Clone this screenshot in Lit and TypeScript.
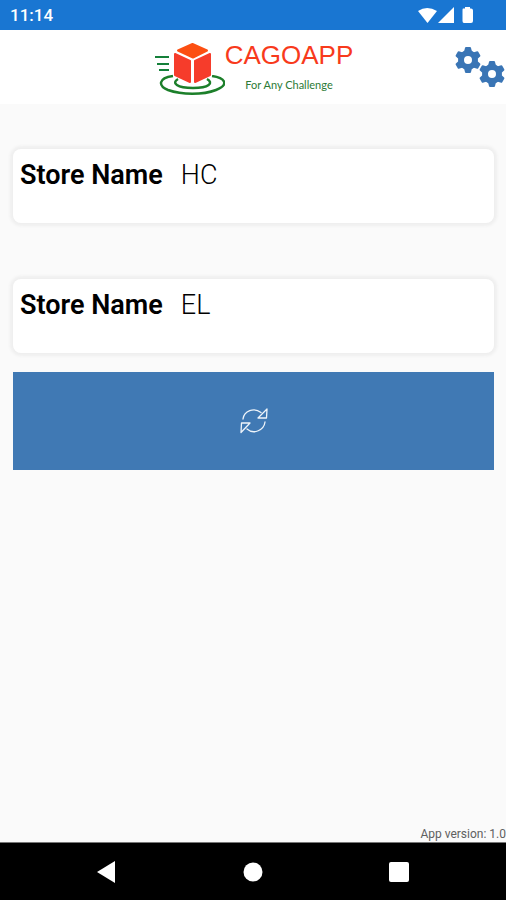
import { LitElement, html, svg, css } from "lit";
import { customElement, property } from "lit/decorators.js";

const TEETH = [0, 60, 120, 180, 240, 300];

const gear = (cx: number, cy: number) => svg`
  <g transform="translate(${cx} ${cy})">
    <circle r="7" fill="none" stroke="currentColor" stroke-width="6" />
    ${TEETH.map(
      (a) => svg`<path transform="rotate(${a})" fill="currentColor" stroke="currentColor"
        stroke-width="2" stroke-linejoin="round" d="M-3 -8 L-2 -12 H2 L3 -8 Z" />`
    )}
  </g>`;

@customElement("store-card")
export class StoreCard extends LitElement {
  @property() name = "";

  static styles = css`
    :host {
      display: block;
      box-sizing: border-box;
      min-height: 74px;
      padding: 10px 7px;
      border-radius: 8px;
      background: #fff;
      box-shadow: 0 0 3px 3px #efefef;
    }
    dl {
      display: flex;
      gap: 18px;
      margin: 0;
      font-size: 27px;
      line-height: 32px;
      color: #000;
    }
    dt {
      font-weight: 600;
    }
    dd {
      margin: 0;
      font-weight: 300;
    }
  `;

  render() {
    return html`<dl><dt>Store Name</dt><dd>${this.name}</dd></dl>`;
  }
}

@customElement("app-root")
export class AppRoot extends LitElement {
  private stores = ["HC", "EL"];

  static styles = css`
    :host {
      display: flex;
      flex-direction: column;
      min-height: 100vh;
      background: #fafafa;
      font-family: Roboto, "Liberation Sans", sans-serif;
    }
    button {
      display: flex;
      align-items: center;
      justify-content: center;
      margin: 0;
      padding: 0;
      border: 0;
      background: none;
      color: inherit;
      cursor: pointer;
    }
    svg {
      display: block;
    }
    .status {
      display: flex;
      align-items: center;
      justify-content: space-between;
      height: 30px;
      padding: 0 32px 0 10px;
      background: #1976d2;
      color: #fff;
      font-size: 17px;
      font-weight: 500;
      line-height: 30px;
    }
    .header {
      display: grid;
      grid-template-columns: 1fr auto 1fr;
      align-items: center;
      height: 74px;
      background: #fff;
    }
    .brand {
      grid-column: 2;
      display: flex;
      align-items: center;
    }
    .title {
      display: flex;
      flex-direction: column;
      align-items: center;
      gap: 8px;
    }
    .name {
      margin: 0;
      color: #f83a1c;
      font: 400 26px/28px "Liberation Sans", sans-serif;
    }
    .tagline {
      margin: 0;
      color: #2c7a36;
      font: 400 11px/16px Lato, sans-serif;
    }
    .settings {
      justify-self: end;
      color: #3a75b5;
    }
    main {
      flex: 1;
      display: flex;
      flex-direction: column;
      padding: 45px 12px 0 13px;
    }
    .stores {
      display: flex;
      flex-direction: column;
      gap: 56px;
    }
    .refresh {
      height: 98px;
      margin-top: 19px;
      background: #4079b4;
      color: #eef4fa;
    }
    .version {
      color: #606060;
      font-size: 12px;
      line-height: 16px;
      text-align: right;
    }
    .nav {
      display: grid;
      grid-template-columns: repeat(3, 1fr);
      height: 58px;
      padding: 0 34px;
      background: #000;
      color: #fff;
      border-top: 1px solid #777;
      box-sizing: border-box;
    }
  `;

  render() {
    return html`
      <div class="status">
        <span>11:14</span>
        <svg width="56" height="18" viewBox="0 0 56 18" fill="currentColor" aria-hidden="true">
          <path d="M0 5 Q9 -1 19 5 L9.500 17 Z" />
          <path d="M20 17 L36 1 V17 Z" />
          <path d="M45 2.500 H47 V1 H52 V2.500 H53 Q55 2.500 55 4.500 V15 Q55 17 53 17 H46 Q44.500 17 44.500 15 V4.500 Q44.500 2.500 45 2.500 Z" />
        </svg>
      </div>
      <header class="header">
        <div class="brand">
          <svg width="72" height="56" viewBox="0 0 72 56" aria-hidden="true">
            <g fill="none" stroke="#15803a" stroke-width="2">
              <path d="M2 18 H16 M4 25 H16 M6 31 H16" />
              <path stroke="#1c7f2a" stroke-width="2.500" d="M20 37 C5 39 5 47 15 51 C29 56 50 56 63 51 C76 46 73 39 59 37" />
              <path stroke="#1c7f2a" stroke-width="2.500" d="M25 40 C18 44 24 49 40 49 C56 49 61 44 54 40" />
            </g>
            <path fill="#fff" d="M40 1 L61 11 V35 L40 47 L19 35 V11 Z" />
            <path fill="#fc4f12" stroke="#fc4f12" stroke-width="2" stroke-linejoin="round" d="M39.500 5 L54 11.500 L40 18.500 L25 11.500 Z" />
            <g fill="#f63c2b" stroke="#f63c2b" stroke-width="2" stroke-linejoin="round">
              <path d="M22 15 L37 22 V43 L22 36 Z" />
              <path d="M57 15 L42 22 V43 L57 36 Z" />
            </g>
          </svg>
          <div class="title">
            <h1 class="name">CAGOAPP</h1>
            <p class="tagline">For Any Challenge</p>
          </div>
        </div>
        <button class="settings" aria-label="Settings">
          <svg width="52" height="44" viewBox="0 0 52 44">${gear(14, 15)}${gear(38, 29)}</svg>
        </button>
      </header>
      <main>
        <div class="stores">
          ${this.stores.map((s) => html`<store-card .name=${s}></store-card>`)}
        </div>
        <button class="refresh" aria-label="Refresh">
          <svg width="28" height="28" viewBox="0 0 28 28" fill="none" stroke="currentColor" stroke-width="1.300" stroke-linejoin="round" stroke-linecap="round">
            <path d="M3 12 C4 4 14 0 21 5.500" />
            <path d="M27 2 L26.500 11 H18 Z" />
            <path d="M25 15 C24 23 14 28 7 22" />
            <path d="M1 25.500 L1.500 16 H10 Z" />
          </svg>
        </button>
      </main>
      <footer class="version">App version: 1.0</footer>
      <nav class="nav">
        <button aria-label="Back">
          <svg width="20" height="22" viewBox="0 0 20 22" fill="currentColor"><path d="M0 11 L18 0 V22 Z" /></svg>
        </button>
        <button aria-label="Home">
          <svg width="20" height="20" viewBox="0 0 20 20" fill="currentColor"><circle cx="10" cy="10" r="9.500" /></svg>
        </button>
        <button aria-label="Recent apps">
          <svg width="20" height="20" viewBox="0 0 20 20" fill="currentColor"><rect width="20" height="20" rx="2" /></svg>
        </button>
      </nav>
    `;
  }
}
